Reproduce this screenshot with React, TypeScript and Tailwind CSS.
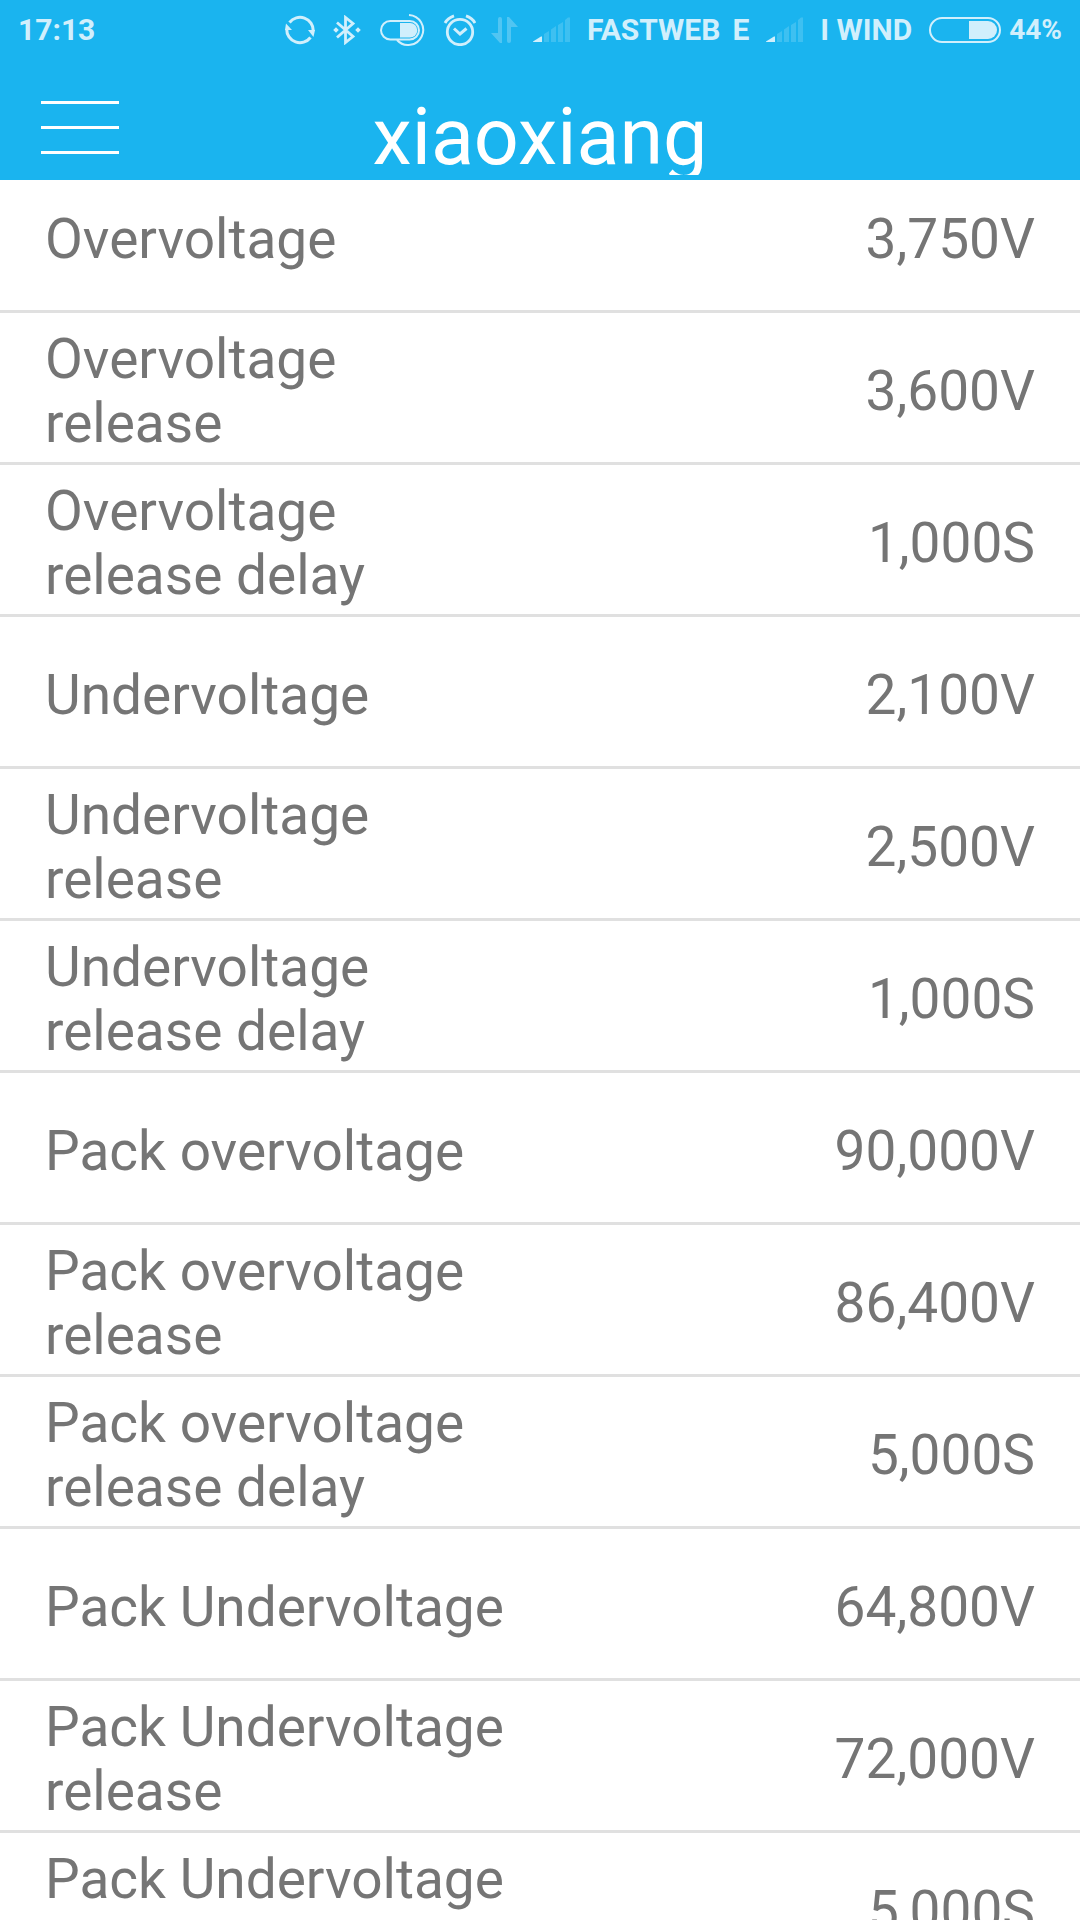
const settings = [
    { label: 'Overvoltage', value: '3,750V' },
    { label: 'Overvoltage release', value: '3,600V' },
    { label: 'Overvoltage release delay', value: '1,000S' },
    { label: 'Undervoltage', value: '2,100V' },
    { label: 'Undervoltage release', value: '2,500V' },
    { label: 'Undervoltage release delay', value: '1,000S' },
    { label: 'Pack overvoltage', value: '90,000V' },
    { label: 'Pack overvoltage release', value: '86,400V' },
    { label: 'Pack overvoltage release delay', value: '5,000S' },
    { label: 'Pack Undervoltage', value: '64,800V' },
    { label: 'Pack Undervoltage release', value: '72,000V' },
    { label: 'Pack Undervoltage release delay', value: '5,000S' },
];

function SyncIcon() {
    return (
        <svg width="30" height="30" viewBox="0 0 30 30" fill="none" stroke="currentColor" strokeWidth="3">
            <path d="M4.5 7.5A13.3 13.3 0 0 1 28.3 16" />
            <path d="M25.5 22.5A13.3 13.3 0 0 1 1.7 14" />
            <path d="M1 8.5L7 15H0Z" fill="currentColor" stroke="none" />
            <path d="M23 15H30L28.5 22Z" fill="currentColor" stroke="none" />
        </svg>
    );
}

function BluetoothIcon() {
    return (
        <svg width="28" height="30" viewBox="0 0 28 30" fill="none" stroke="currentColor" strokeWidth="2.8">
            <path d="M4 7.5L20 21.5L12.5 27.5V2.5L20 8.5L4 22.5" />
            <path d="M3 12.2L5.8 15L3 17.8L0.2 15ZM25 12.2L27.8 15L25 17.8L22.2 15Z" fill="currentColor" stroke="none" />
        </svg>
    );
}

function SwitchIcon() {
    return (
        <svg width="46" height="32" viewBox="0 0 46 32" fill="none" stroke="currentColor" strokeWidth="2">
            <rect x="2" y="7" width="38" height="18.5" rx="9.25" />
            <path d="M21 9H31A7.2 7.2 0 0 1 31 23.5H21Z" fill="currentColor" stroke="none" />
            <path d="M30 1A15 15 0 1 1 18 26" />
        </svg>
    );
}

function AlarmIcon() {
    return (
        <svg width="33" height="32" viewBox="0 0 33 32" fill="none" stroke="currentColor" strokeWidth="2.8">
            <circle cx="17" cy="18" r="12.7" />
            <path d="M11 14.5L17 20L23.5 14.5" strokeWidth="3" />
            <path d="M2 9Q4.5 4 11 1.8M32 9Q29.5 4 23 1.8" />
        </svg>
    );
}

function DataIcon() {
    return (
        <svg width="27" height="26" viewBox="0 0 27 26" fill="currentColor" opacity="0.3">
            <path d="M7 2Q7 0 9 0T11 2V26H9L0 16H7Z" />
            <path d="M16 0H18L27 10H20V24Q20 26 18 26T16 24Z" />
        </svg>
    );
}

function SignalIcon() {
    return (
        <svg width="37" height="26" viewBox="0 0 37 26" fill="currentColor">
            <path d="M0 24.5L8 19.5H9V25H0Z" />
            <path d="M11 17L16 14V25H11ZM18 12.5L23 9V25H18ZM25 8L30 5V25H25ZM32 3L35 0.5H37V25H32Z" opacity="0.2" />
        </svg>
    );
}

function BatteryIcon() {
    return (
        <svg width="72" height="26" viewBox="0 0 72 26" fill="none">
            <rect x="1" y="1" width="70" height="24" rx="12" stroke="currentColor" strokeWidth="2" />
            <path d="M40 4H59A9 9 0 0 1 59 22H40Z" fill="currentColor" />
        </svg>
    );
}

function StatusBar() {
    return (
        <div className="flex h-[60px] items-center justify-between px-[18px] text-[30px] leading-[60px] font-bold whitespace-nowrap text-[#d1effc]">
            <span>17:13</span>
            <div className="flex items-center gap-[17px]">
                <div className="flex items-center gap-[15px]">
                    <div className="flex items-center gap-[18px]">
                        <SyncIcon />
                        <BluetoothIcon />
                        <SwitchIcon />
                        <AlarmIcon />
                    </div>
                    <DataIcon />
                    <SignalIcon />
                </div>
                <div className="flex gap-3">
                    <span>FASTWEB</span>
                    <span>E</span>
                </div>
                <SignalIcon />
                <span>I WIND</span>
                <div className="flex items-center gap-2">
                    <BatteryIcon />
                    <span className="text-[28px]">44%</span>
                </div>
            </div>
        </div>
    );
}

export default function App() {
    return (
        <div className="flex h-screen flex-col overflow-hidden bg-white font-['Roboto',sans-serif]">
            <header className="relative z-10 shrink-0 bg-[#1ab4ef]">
                <StatusBar />
                <div className="grid h-[120px] grid-cols-[1fr_auto_1fr] px-[41px] pb-[5px]">
                    <button type="button" aria-label="Menu" className="mt-[41px] flex w-[78px] flex-col gap-[22px] self-start">
                        <span className="h-[3px] w-full bg-white" />
                        <span className="h-[3px] w-full bg-white" />
                        <span className="h-[3px] w-full bg-white" />
                    </button>
                    <h1 className="overflow-hidden pt-[30px] text-[79px] leading-[94px] text-white">xiaoxiang</h1>
                </div>
            </header>
            <main className="min-h-0 flex-1 overflow-hidden">
                {/* list sits slightly scrolled under the header */}
                <dl className="-mt-[19px] text-[55px] leading-[64px] text-[#757575]">
                    {settings.map((item) => (
                        <div
                            key={item.label}
                            className="flex h-[152px] items-center justify-between border-b-3 border-[#e0e0e0] px-[45px] pt-[6px]"
                        >
                            <dt className="w-[470px]">{item.label}</dt>
                            <dd>{item.value}</dd>
                        </div>
                    ))}
                </dl>
            </main>
        </div>
    );
}
